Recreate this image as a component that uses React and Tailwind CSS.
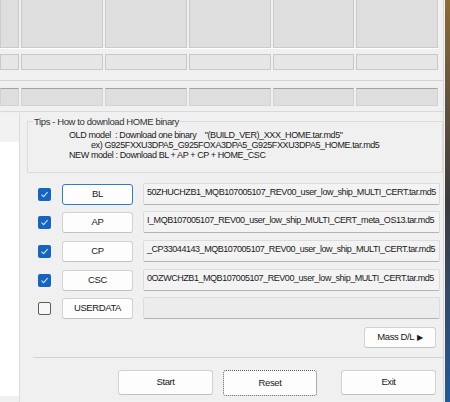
import React from 'react';

const CELL_WIDTHS = [19, 82, 82, 82, 81, 82];

const FILES = [
  { label: 'BL', checked: true, focus: true, path: '50ZHUCHZB1_MQB107005107_REV00_user_low_ship_MULTI_CERT.tar.md5', mt: 'mt-[10px]' },
  { label: 'AP', checked: true, path: 'I_MQB107005107_REV00_user_low_ship_MULTI_CERT_meta_OS13.tar.md5', mt: 'mt-[6px]' },
  { label: 'CP', checked: true, path: '_CP33044143_MQB107005107_REV00_user_low_ship_MULTI_CERT.tar.md5', mt: 'mt-[7px]' },
  { label: 'CSC', checked: true, path: '0OZWCHZB1_MQB107005107_REV00_user_low_ship_MULTI_CERT.tar.md5', mt: 'mt-[7px]' },
  { label: 'USERDATA', checked: false, path: '', mt: 'mt-[6px]' },
];

const CellRow = ({ className, cellClass }) => (
  <div className={`flex gap-[2px] ${className}`}>
    {CELL_WIDTHS.map((w, i) => (
      <div key={i} className={cellClass} style={{ width: w }} />
    ))}
  </div>
);

const CheckBox = ({ checked }) =>
  checked ? (
    <div className="w-[13px] h-[13px] rounded-[2px] bg-[#1565c0] flex items-center justify-center">
      <svg width="9" height="9" viewBox="0 0 9 9">
        <path d="M1.5 4.6 L3.6 6.6 L7.6 2.2" fill="none" stroke="#cfe0f5" strokeWidth="1.1" />
      </svg>
    </div>
  ) : (
    <div className="w-[13px] h-[13px] rounded-[2px] border border-[#5c5c5c] bg-[#f7f7f7]" />
  );

const Button = ({ children, className = '' }) => (
  <div
    className={`flex items-center justify-center rounded-[3px] bg-[#fdfdfd] text-[9.5px] text-[#1a1a1a] ${className}`}
  >
    {children}
  </div>
);

export default function App() {
  return (
    <div
      className="w-[450px] h-[402px] flex overflow-hidden bg-[#f0f0f0] text-[#111]"
      style={{ fontFamily: '"Liberation Sans", Arial, sans-serif' }}
    >
      <div className="w-[444px] h-full flex flex-col border-r border-[#d6d6d6]">
        {/* status cells */}
        <CellRow className="h-[48px]" cellClass="h-full bg-[#dedede] border-x border-b border-[#cbcbcb]" />
        <div className="h-px bg-white w-[439px]" />
        <CellRow className="h-[16px] mt-[5px]" cellClass="h-full bg-[#e6e6e6] border border-[#c9c9c9]" />
        <div className="mt-[10px] h-px bg-[#d6d6d6] w-[443px]" />
        <CellRow
          className="h-[18px] mt-[7px]"
          cellClass="h-full bg-[#dedede] border border-[#d2d2d2] border-t-[#a3a3a3]"
        />
        <div className="mt-[5px] h-px bg-[#d9d9d9] w-[443px]" />

        <div className="flex flex-1">
          {/* log panel */}
          <div className="w-[20px] flex flex-col border-r border-[#dcdcdc] mt-[1px]">
            <div className="h-[29px] bg-[#f2f2f2]" />
            <div className="h-[254px] bg-white" />
          </div>

          <div className="flex-1 flex flex-col pl-[7px]" style={{ letterSpacing: '-0.4px' }}>
            {/* tips */}
            <div className="relative mt-[9px] h-[52px] border border-[#dcdcdc] text-[9px] leading-[10px] text-[#1a1a1a]">
              <span className="absolute -top-[6px] left-[5px] bg-[#f0f0f0] px-px text-[9.5px] leading-[11px] text-[#333]">
                Tips - How to download HOME binary
              </span>
              <div className="pt-[8px] pl-[41px] whitespace-pre">OLD model  : Download one binary    "(BUILD_VER)_XXX_HOME.tar.md5"</div>
              <div className="pl-[63px] whitespace-pre">ex) G925FXXU3DPA5_G925FOXA3DPA5_G925FXXU3DPA5_HOME.tar.md5</div>
              <div className="pl-[41px] whitespace-pre">NEW model : Download BL + AP + CP + HOME_CSC</div>
            </div>

            {/* file rows */}
            {FILES.map((f) => (
              <div key={f.label} className={`flex items-center h-[22px] ${f.mt}`}>
                <div className="w-[24px] flex justify-end">
                  <CheckBox checked={f.checked} />
                </div>
                <Button
                  className={`ml-[11px] w-[71px] h-[21px] border ${
                    f.focus ? 'border-[#2f7bd0]' : 'border-[#d2d2d2] border-b-[#c2c2c2]'
                  }`}
                >
                  {f.label}
                </Button>
                <div
                  className={`ml-[10px] w-[297px] h-[22px] overflow-hidden whitespace-nowrap rounded-[2px] border border-[#dcdcdc] border-b-[#b3b3b3] pl-[3px] pt-[3px] text-[9px] leading-[11px] tracking-[-0.45px] text-[#1a1a1a] ${
                    f.path ? 'bg-[#f3f3f3]' : 'bg-[#ececec]'
                  }`}
                >
                  {f.path}
                </div>
              </div>
            ))}

            <div className="flex justify-end pr-[7px] mt-[8px]">
              <Button className="w-[72px] h-[21px] border border-[#d2d2d2] border-b-[#c2c2c2]">
                Mass D/L <span className="ml-[3px] text-[8px]">▶</span>
              </Button>
            </div>

            <div className="ml-[6px] mt-[9px] h-px bg-[#d2d2d2]" />

            {/* actions */}
            <div className="flex mt-[12px]">
              <Button className="ml-[91px] w-[95px] h-[25px] border border-[#d2d2d2] border-b-[#c2c2c2]">
                Start
              </Button>
              <Button className="ml-[10px] w-[94px] h-[26px] border border-dotted border-[#5a5a5a] rounded-[2px]">
                Reset
              </Button>
              <Button className="ml-[24px] w-[95px] h-[25px] border border-[#d2d2d2] border-b-[#c2c2c2]">
                Exit
              </Button>
            </div>
          </div>
        </div>
      </div>

      {/* desktop behind the window */}
      <div className="flex-1 h-full bg-[#f4f4f4] pl-px">
        <div className="h-full bg-gradient-to-b from-[#8c6b35] via-[#3b3a3c] to-[#1f5a9c]" />
      </div>
    </div>
  );
}
